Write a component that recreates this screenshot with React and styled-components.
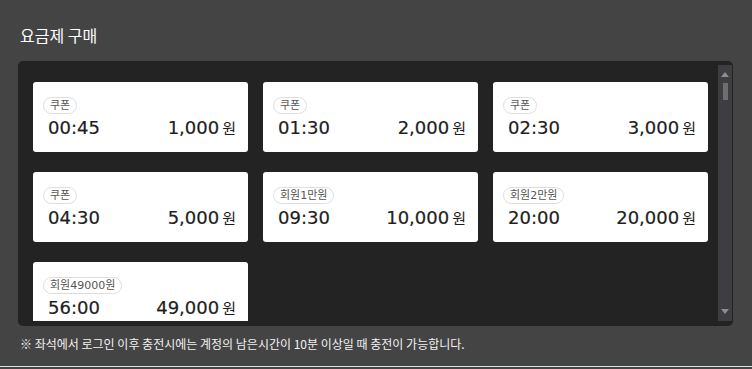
import React from "react";
import styled, { createGlobalStyle } from "styled-components";

const plans = [
  { tag: "쿠폰", time: "00:45", price: "1,000" },
  { tag: "쿠폰", time: "01:30", price: "2,000" },
  { tag: "쿠폰", time: "02:30", price: "3,000" },
  { tag: "쿠폰", time: "04:30", price: "5,000" },
  { tag: "회원1만원", time: "09:30", price: "10,000" },
  { tag: "회원2만원", time: "20:00", price: "20,000" },
  { tag: "회원49000원", time: "56:00", price: "49,000" },
];

function App() {
  return (
    <>
      <GlobalStyle />
      <Page>
        <Title>요금제 구매</Title>
        <Panel>
          <ScrollArea>
            <Grid>
              {plans.map((p, i) => (
                <Card key={i}>
                  <Tag>{p.tag}</Tag>
                  <Row>
                    <Amount>{p.time}</Amount>
                    <Amount>
                      {p.price}
                      <Won>원</Won>
                    </Amount>
                  </Row>
                </Card>
              ))}
            </Grid>
          </ScrollArea>
          <Scrollbar>
            <Arrow />
            <Thumb />
            <Spacer />
            <Arrow down />
          </Scrollbar>
        </Panel>
        <Notice>※ 좌석에서 로그인 이후 충전시에는 계정의 남은시간이 10분 이상일 때 충전이 가능합니다.</Notice>
      </Page>
    </>
  );
}

const GlobalStyle = createGlobalStyle`
  html, body {
    margin: 0;
    padding: 0;
    background: #444444;
  }
  body {
    font-family: "Noto Sans CJK KR", "Noto Sans", sans-serif;
  }
`;

const Page = styled.div`
  height: 367px;
  padding: 24px 0 0 18px;
  box-sizing: border-box;
  border-bottom: 1px solid #d8e6e6;
  background: #444444;
`;

const Title = styled.h2`
  margin: 0 0 14px 2px;
  font-size: 16px;
  line-height: 23px;
  font-weight: 400;
  color: #ffffff;
`;

const Panel = styled.div`
  display: flex;
  width: 715px;
  height: 265px;
  padding: 4px 1px 5px 0;
  box-sizing: border-box;
  background: #232323;
  border-radius: 5px;
`;

const ScrollArea = styled.div`
  flex: 1;
  overflow: hidden;
  padding: 17px 0 0 15px;
`;

const Grid = styled.div`
  display: grid;
  grid-template-columns: repeat(3, 215px);
  column-gap: 15px;
  row-gap: 20px;
`;

const Card = styled.div`
  display: flex;
  flex-direction: column;
  align-items: flex-start;
  height: 70px;
  box-sizing: border-box;
  padding: 15px 12px 0 10px;
  background: #ffffff;
  border-radius: 3px;
`;

const Tag = styled.span`
  height: 17px;
  box-sizing: border-box;
  padding: 0 6px;
  border: 1px solid #dedede;
  border-radius: 9px;
  font-family: "DejaVu Sans", "Noto Sans CJK KR", sans-serif;
  font-size: 11px;
  line-height: 15px;
  color: #555555;
`;

const Row = styled.div`
  align-self: stretch;
  display: flex;
  justify-content: space-between;
  align-items: baseline;
  margin-top: 2px;
  padding-left: 5px;
`;

const Amount = styled.span`
  font-family: "DejaVu Sans", "Noto Sans CJK KR", sans-serif;
  font-size: 18px;
  line-height: 24px;
  font-weight: 400;
  color: #1e1e1e;
  -webkit-text-stroke: 0.2px #1e1e1e;
`;

const Won = styled.span`
  margin-left: 3px;
  font-family: "Noto Sans CJK KR", sans-serif;
  font-size: 15px;
  -webkit-text-stroke: 0;
`;

const Scrollbar = styled.div`
  display: flex;
  flex-direction: column;
  align-items: center;
  width: 14px;
  background: #3d3d42;
`;

const Arrow = styled.div`
  width: 0;
  height: 0;
  margin: ${(p) => (p.down ? "0 0 7px" : "7px 0 0")};
  border-left: 4px solid transparent;
  border-right: 4px solid transparent;
  ${(p) =>
    p.down ? "border-top: 5px solid #8e8e8e;" : "border-bottom: 5px solid #8e8e8e;"}
`;

const Thumb = styled.div`
  width: 5px;
  height: 17px;
  margin-top: 6px;
  background: #6e6e6e;
`;

const Spacer = styled.div`
  flex: 1;
`;

const Notice = styled.p`
  margin: 9px 0 0 2px;
  font-size: 12px;
  line-height: 17px;
  color: #f2f2f2;
`;

export default App;
